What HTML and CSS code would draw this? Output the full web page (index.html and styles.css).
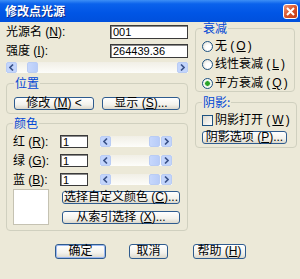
FILE: index.html
```html
<!DOCTYPE html>
<html lang="zh-CN">
<head>
    <meta charset="UTF-8">
    <title>修改点光源</title>
    <link rel="stylesheet" href="styles.css">
</head>
<body>

    <div class="window">
        <div class="titlebar">
            <span class="title">修改点光源</span>
            <span class="close">
                <svg width="9" height="9" viewBox="0 0 9 9"><path d="M1 1 L8 8 M8 1 L1 8" stroke="#fff" stroke-width="2" fill="none"/></svg>
            </span>
        </div>

        <div class="content">
            <div class="main">
                <div class="left">
                    <div class="field-row first">
                        <label>光源名 (<u>N</u>):</label>
                        <input class="edit" type="text" value="001">
                    </div>
                    <div class="field-row second">
                        <label>强度 (<u>I</u>):</label>
                        <input class="edit" type="text" value="264439.36">
                    </div>
                    <div class="scroll wide">
                        <span class="arrow"><svg width="5" height="7" viewBox="0 0 5 7"><path d="M4 0.5 L1 3.5 L4 6.5" stroke="#3A5288" stroke-width="1.6" fill="none"/></svg></span>
                        <span class="thumb"></span>
                        <span class="track"></span>
                        <span class="arrow"><svg width="5" height="7" viewBox="0 0 5 7"><path d="M1 0.5 L4 3.5 L1 6.5" stroke="#3A5288" stroke-width="1.6" fill="none"/></svg></span>
                    </div>

                    <fieldset class="group pos">
                        <legend>位置</legend>
                        <div class="pos-buttons">
                            <button class="btn modify">修改 (<u>M</u>) &lt;</button>
                            <button class="btn show">显示 (<u>S</u>)...</button>
                        </div>
                    </fieldset>

                    <fieldset class="group color">
                        <legend>颜色</legend>
                        <div class="color-row">
                            <label>红 (<u>R</u>):</label>
                            <input class="edit small" type="text" value="1">
                            <div class="scroll slider">
                                <span class="arrow"><svg width="5" height="7" viewBox="0 0 5 7"><path d="M4 0.5 L1 3.5 L4 6.5" stroke="#3A5288" stroke-width="1.6" fill="none"/></svg></span>
                                <span class="track"></span>
                                <span class="thumb"></span>
                                <span class="arrow"><svg width="5" height="7" viewBox="0 0 5 7"><path d="M1 0.5 L4 3.5 L1 6.5" stroke="#3A5288" stroke-width="1.6" fill="none"/></svg></span>
                            </div>
                        </div>
                        <div class="color-row">
                            <label>绿 (<u>G</u>):</label>
                            <input class="edit small" type="text" value="1">
                            <div class="scroll slider">
                                <span class="arrow"><svg width="5" height="7" viewBox="0 0 5 7"><path d="M4 0.5 L1 3.5 L4 6.5" stroke="#3A5288" stroke-width="1.6" fill="none"/></svg></span>
                                <span class="track"></span>
                                <span class="thumb"></span>
                                <span class="arrow"><svg width="5" height="7" viewBox="0 0 5 7"><path d="M1 0.5 L4 3.5 L1 6.5" stroke="#3A5288" stroke-width="1.6" fill="none"/></svg></span>
                            </div>
                        </div>
                        <div class="color-row">
                            <label>蓝 (<u>B</u>):</label>
                            <input class="edit small" type="text" value="1">
                            <div class="scroll slider">
                                <span class="arrow"><svg width="5" height="7" viewBox="0 0 5 7"><path d="M4 0.5 L1 3.5 L4 6.5" stroke="#3A5288" stroke-width="1.6" fill="none"/></svg></span>
                                <span class="track"></span>
                                <span class="thumb"></span>
                                <span class="arrow"><svg width="5" height="7" viewBox="0 0 5 7"><path d="M1 0.5 L4 3.5 L1 6.5" stroke="#3A5288" stroke-width="1.6" fill="none"/></svg></span>
                            </div>
                        </div>
                        <div class="swatch-row">
                            <div class="swatch"></div>
                            <div class="swatch-buttons">
                                <button class="btn pick">选择自定义颜色 (<u>C</u>)...</button>
                                <button class="btn index">从索引选择 (<u>X</u>)...</button>
                            </div>
                        </div>
                    </fieldset>
                </div>

                <div class="right">
                    <fieldset class="group falloff">
                        <legend>衰减</legend>
                        <div class="option first"><span class="radio"></span>无 (<u>O</u>)</div>
                        <div class="option"><span class="radio"></span>线性衰减 (<u>L</u>)</div>
                        <div class="option"><span class="radio checked"></span>平方衰减 (<u>Q</u>)</div>
                    </fieldset>

                    <fieldset class="group shadow">
                        <legend>阴影:</legend>
                        <div class="option first"><span class="check"></span>阴影打开 (<u>W</u>)</div>
                        <button class="btn shadow-btn">阴影选项 (<u>P</u>)...</button>
                    </fieldset>
                </div>
            </div>

            <div class="dialog-buttons">
                <button class="btn ok">确定</button>
                <button class="btn cancel">取消</button>
                <button class="btn help">帮助 (<u>H</u>)</button>
            </div>
        </div>
    </div>

</body>
</html>
```

FILE: styles.css
```css
* { box-sizing: border-box; }
body { margin: 0; font-family: "Liberation Sans", "Noto Sans CJK SC", sans-serif; font-size: 12px; color: #000; }

.window { width: 300px; height: 279px; background: #ECE9D8; overflow: hidden; }

.titlebar { height: 22px; display: flex; align-items: center; justify-content: space-between; padding: 0 2px 0 5px;
    background: linear-gradient(#3D8FF6 0%, #0A62EC 18%, #0055E5 60%, #0050DC 100%); }
.title { color: #fff; font-weight: bold; font-size: 12px; line-height: 12px; text-shadow: 1px 1px #0B2C8A; font-family: "Noto Sans CJK SC", sans-serif; }
.close { width: 15px; height: 15px; border: 1px solid #fff; border-radius: 3px; display: flex; align-items: center; justify-content: center;
    background: linear-gradient(135deg, #F09878, #D8542C 50%, #C23A14); }

.content { padding: 0 6px; }
.main { display: flex; gap: 7px; }
.left { width: 182px; }
.right { width: 99px; }

label, legend, .option, .btn { line-height: 12px; white-space: nowrap; }

.field-row { display: flex; align-items: center; height: 14px; }
.field-row.first { margin-top: 3px; }
.field-row.second { margin-top: 5px; }
.field-row label { width: 104px; }

.edit { width: 78px; height: 14px; border: 1px solid #3A3A3A; background: #fff; font: 11px "Liberation Sans", sans-serif; padding: 0 2px; box-shadow: inset 1px 1px #8A8A8A; }
.edit.small { width: 28px; }

.scroll { display: flex; height: 11px; background: linear-gradient(#F1EFE6, #FDFDFA); }
.scroll.wide { margin-top: 4px; width: 182px; }
.scroll .arrow, .scroll .thumb { width: 11px; height: 11px; border: 1px solid #B9CCF4; border-radius: 2px; background: #C3D5FC; display: flex; align-items: center; justify-content: center; }
.scroll .thumb { background: linear-gradient(90deg, #C6D7FC, #B8CCF8); }
.scroll.wide .thumb { margin-left: 10px; }
.scroll .track { flex: 1; }
.slider { width: 72px; margin-left: 12px; }
.slider .thumb { margin-right: 1px; }

.group { margin: 0; padding: 0 6px; border: 1px solid #D0D0BF; border-radius: 4px; }
.group legend { color: #0046D5; padding: 0 1px; font-size: 12px; font-family: "Noto Sans CJK SC", sans-serif; }

.pos { margin-top: 4px; padding: 0 6px 3px 7px; }
.pos-buttons { display: flex; gap: 8px; margin-top: 8px; }
.btn { height: 13px; padding: 0; border: 1px solid #2E5B8E; border-radius: 3px; font: 12px "Liberation Sans", "Noto Sans CJK SC", sans-serif; line-height: 11px; color: #000;
    background: linear-gradient(#FFFFFF, #F3F2EC 60%, #DCD8CC); }
.btn.modify { width: 80px; }
.btn.show { width: 78px; }

.color { margin-top: 3px; padding: 0 6px 5px 6px; }
.color-row { display: flex; align-items: center; height: 13px; margin-top: 6px; }
.color-row label { width: 47px; }
.color-row .edit { height: 13px; }
.swatch-row { display: flex; margin-top: 3px; }
.swatch { width: 36px; height: 36px; background: #fff; border: 1px solid #C5C2B2; }
.swatch-buttons { margin-left: 13px; padding-top: 2px; display: flex; flex-direction: column; gap: 7px; }
.swatch-buttons .btn { width: 118px; }

.falloff { padding: 0 6px 2px 6px; }
.option { display: flex; align-items: center; height: 12px; margin-top: 6px; gap: 2px; }
.option.first { margin-top: 6px; }
.falloff .option:last-child { margin-top: 7px; }
.radio { width: 11px; height: 11px; border-radius: 50%; border: 1px solid #1D5281; background: radial-gradient(circle at 60% 60%, #FFFFFF 30%, #DCD9CD 100%); }
.radio.checked { background: radial-gradient(circle, #2BA32B 0 2px, #B8E2B0 2.5px, #FFFFFF 3.5px, #DCD9CD 100%); }
.check { width: 11px; height: 11px; border: 1px solid #1D5281; background: linear-gradient(135deg, #DCD9CD, #FFFFFF); }

.shadow { margin-top: 4px; padding: 0 6px 3px 6px; }
.shadow-btn { width: 85px; margin-top: 5px; }

.dialog-buttons { display: flex; margin-top: 13px; padding-left: 49px; }
.dialog-buttons .btn { height: 15px; }
.btn.ok { width: 51px; box-shadow: inset 0 0 0 1px #9CB8F0; }
.btn.cancel { width: 39px; margin-left: 23px; }
.btn.help { width: 53px; margin-left: 25px; }
```
